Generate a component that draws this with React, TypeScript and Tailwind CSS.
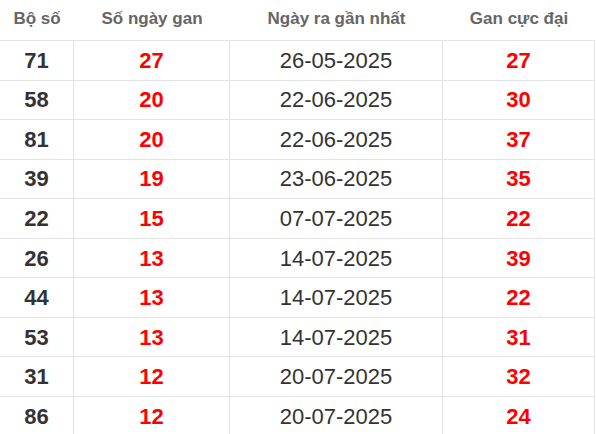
const rows: [string, string, string, string][] = [
  ['71', '27', '26-05-2025', '27'],
  ['58', '20', '22-06-2025', '30'],
  ['81', '20', '22-06-2025', '37'],
  ['39', '19', '23-06-2025', '35'],
  ['22', '15', '07-07-2025', '22'],
  ['26', '13', '14-07-2025', '39'],
  ['44', '13', '14-07-2025', '22'],
  ['53', '13', '14-07-2025', '31'],
  ['31', '12', '20-07-2025', '32'],
  ['86', '12', '20-07-2025', '24'],
];

const cols = 'grid grid-cols-[74px_156px_213px_152px]';

export default function App() {
  return (
    <div className="w-[596px] h-[434px] overflow-hidden bg-white font-['Liberation_Sans',Arial,sans-serif]">
      <div className="w-[595px]">
        {/* header */}
        <div className={`${cols} h-[41px] border-b border-[#e3e3e3] text-[17px] font-bold text-[#666]`}>
          <div className="flex items-center justify-center pb-[2px]">Bộ số</div>
          <div className="flex items-center justify-center pb-[2px]">Số ngày gan</div>
          <div className="flex items-center justify-center pb-[2px]">Ngày ra gần nhất</div>
          <div className="flex items-center justify-center pb-[2px]">Gan cực đại</div>
        </div>

        {rows.map(([num, days, date, max]) => (
          <div key={num} className={`${cols} h-[39.55px] border-b border-[#e3e3e3] text-[22px]`}>
            <div className="flex items-center justify-center border-r border-[#e3e3e3] font-bold text-[#333]">{num}</div>
            <div className="flex items-center justify-center border-r border-[#e3e3e3] font-bold text-[#ff0000]">{days}</div>
            <div className="flex items-center justify-center border-r border-[#e3e3e3] text-[#333]">{date}</div>
            <div className="flex items-center justify-center border-r border-[#e3e3e3] font-bold text-[#ff0000]">{max}</div>
          </div>
        ))}
      </div>
    </div>
  );
}
